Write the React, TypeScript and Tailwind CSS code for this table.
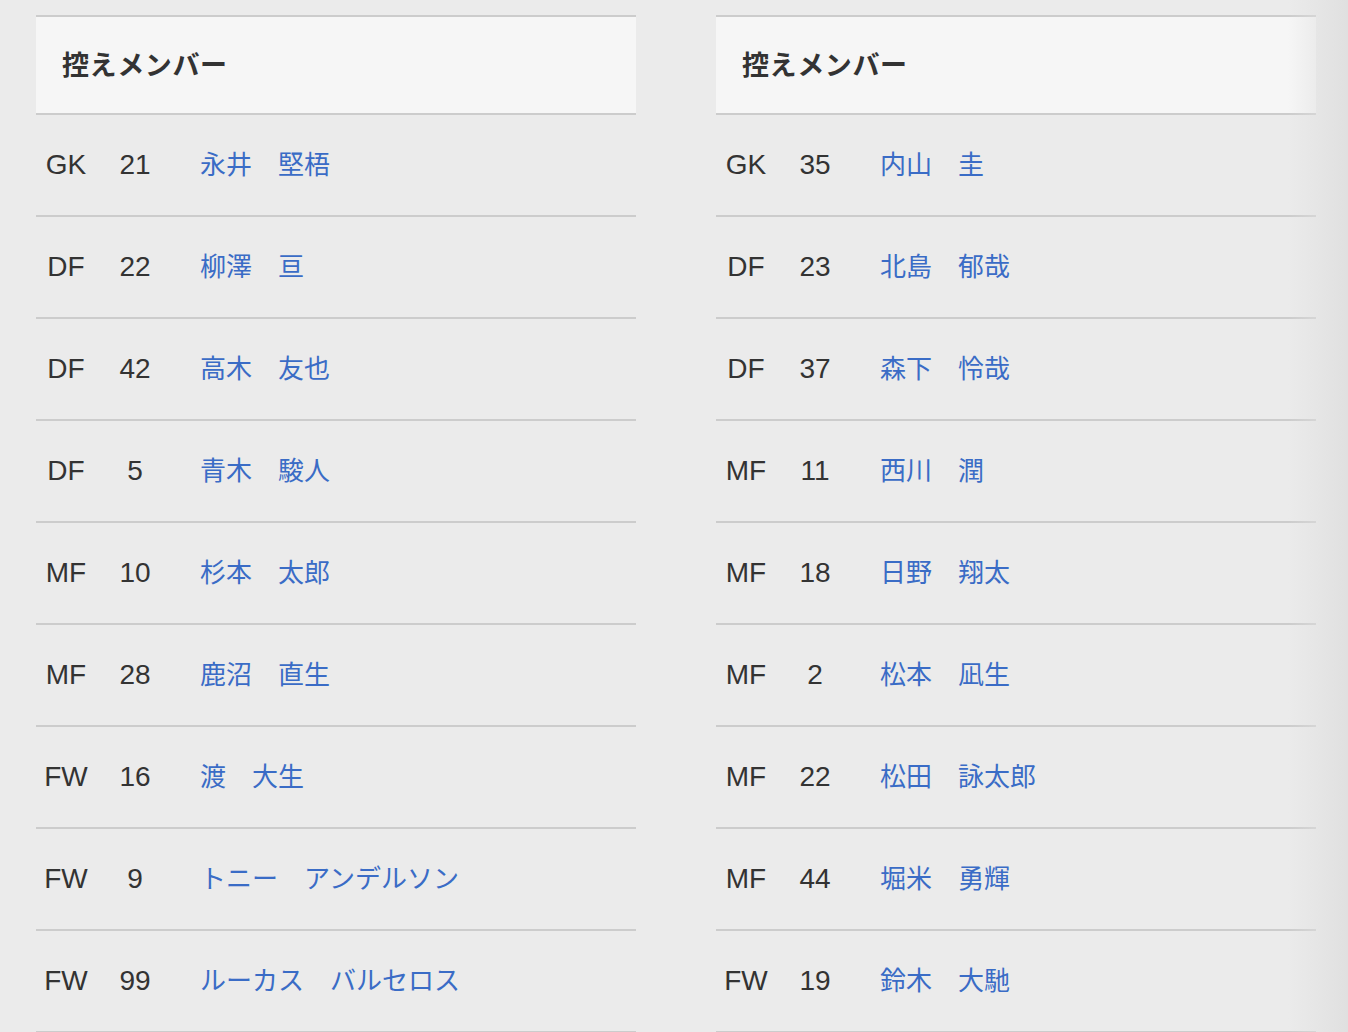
import React from "react";

type Row = [string, string, string, string];

const left: Row[] = [
  ["GK", "21", "永井", "堅梧"],
  ["DF", "22", "柳澤", "亘"],
  ["DF", "42", "高木", "友也"],
  ["DF", "5", "青木", "駿人"],
  ["MF", "10", "杉本", "太郎"],
  ["MF", "28", "鹿沼", "直生"],
  ["FW", "16", "渡", "大生"],
  ["FW", "9", "トニー", "アンデルソン"],
  ["FW", "99", "ルーカス", "バルセロス"],
];

const right: Row[] = [
  ["GK", "35", "内山", "圭"],
  ["DF", "23", "北島", "郁哉"],
  ["DF", "37", "森下", "怜哉"],
  ["MF", "11", "西川", "潤"],
  ["MF", "18", "日野", "翔太"],
  ["MF", "2", "松本", "凪生"],
  ["MF", "22", "松田", "詠太郎"],
  ["MF", "44", "堀米", "勇輝"],
  ["FW", "19", "鈴木", "大馳"],
];

const latin = { fontFamily: '"Liberation Sans", Arial, sans-serif' };

function Table({ rows }: { rows: Row[] }) {
  return (
    <div className="w-[600px] border-t-2 border-[#cccccc]">
      <div className="h-[98px] bg-[#f6f6f6] flex items-center pl-[26px] pb-[3px] border-b-2 border-[#cccccc]">
        <span className="text-[27px] font-bold text-[#333333] leading-none tracking-[0.6px]">控えメンバー</span>
      </div>
      {rows.map((r, i) => (
        <div
          key={i}
          className="h-[102px] flex items-center pb-[4px] border-b-2 border-[#cccccc] leading-none text-[#333333]"
        >
          <div className="w-[60px] text-center text-[28px] pt-[3px]" style={latin}>{r[0]}</div>
          <div className="w-[78px] text-center text-[28px] pt-[3px]" style={latin}>{r[1]}</div>
          <div className="pl-[26px] text-[#3a6cc6] text-[26px] whitespace-nowrap">
            {r[2]}
            {"\u3000"}
            {r[3]}
          </div>
        </div>
      ))}
    </div>
  );
}

export default function App() {
  return (
    <div
      className="relative w-[1348px] h-[1032px] bg-[#ebebeb] overflow-hidden"
      style={{ fontFamily: '"Noto Sans CJK JP", "Noto Sans", sans-serif' }}
    >
      <div className="flex gap-[80px] pl-[36px] pt-[15px]">
        <Table rows={left} />
        <Table rows={right} />
      </div>
      <div className="absolute top-0 right-0 h-full w-[60px] bg-gradient-to-r from-transparent to-[#e0e0e0] pointer-events-none" />
    </div>
  );
}
